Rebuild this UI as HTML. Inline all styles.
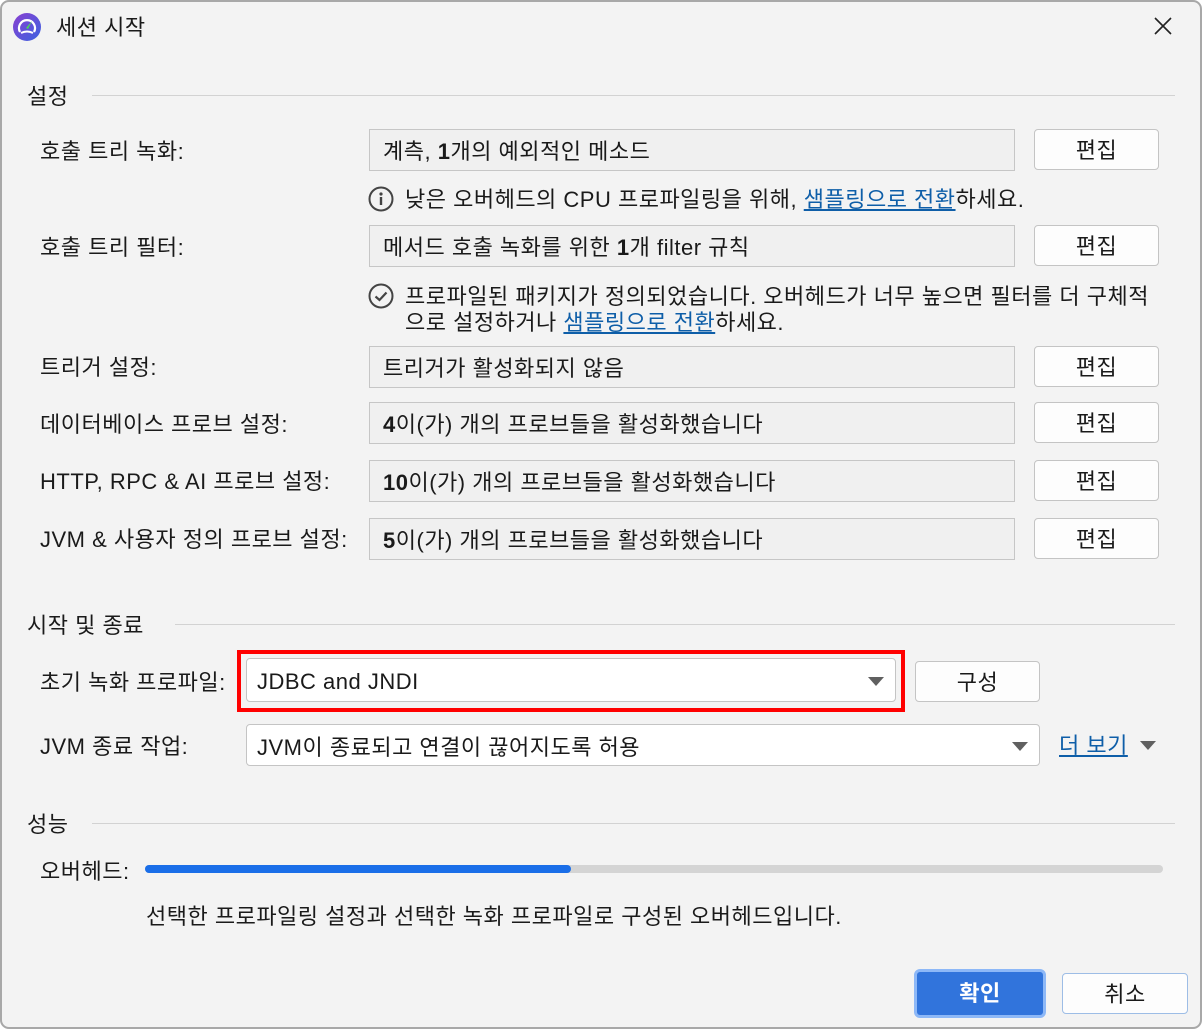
<!DOCTYPE html>
<html><head><meta charset="utf-8"><style>
*{margin:0;padding:0;box-sizing:border-box}
html,body{width:1202px;height:1029px;overflow:hidden;background:#fff}
#w{position:absolute;left:0;top:0;width:1202px;height:1029px;background:#f3f3f3;box-shadow:inset 0 0 0 2px #a8a8a8;border-radius:9px;font-family:"Liberation Sans","Noto Sans CJK KR",sans-serif;color:#1a1a1a;letter-spacing:0.5px}
.t{position:absolute;font-size:22px;line-height:30px;white-space:nowrap}
.line{position:absolute;height:1px;background:#d2d2d2}
.f{position:absolute;left:369px;width:646px;height:42px;background:#f0f0f0;border:1px solid #c6c6c6}
.f span{position:absolute;left:13px;top:7px;font-size:22px;line-height:30px;white-space:nowrap}
.b{position:absolute;left:1034px;width:125px;height:41px;background:#fdfdfd;border:1px solid #c4c4c4;border-radius:4px;font-size:22px;line-height:41px;text-align:center}
a{color:#0e5ea8;text-decoration:underline}
.cb{position:absolute;background:#fff;border:1px solid #c4c4c4;border-radius:4px}
.cb span{position:absolute;left:10px;top:8px;font-size:22px;line-height:30px;white-space:nowrap}
.arr{position:absolute;width:0;height:0;border-left:8px solid transparent;border-right:8px solid transparent;border-top:9px solid #606060}
</style></head><body><div id="w">
<svg style="position:absolute;left:12px;top:12px" width="30" height="30" viewBox="0 0 30 30">
<defs><linearGradient id="g" x1="0" y1="0" x2="1" y2="1"><stop offset="0" stop-color="#8a3fd1"/><stop offset="1" stop-color="#3b63e0"/></linearGradient></defs>
<circle cx="15" cy="15" r="14" fill="url(#g)"/>
<path d="M8 20 A8 8 0 1 1 22 20" fill="none" stroke="#fff" stroke-width="2.2"/>
<path d="M9 21 Q15 18 21 21" fill="none" stroke="#fff" stroke-width="2"/>
<path d="M14 16 L20 9 L16 17 Z" fill="#4cd35a"/>
</svg>
<div class="t" style="left:56px;top:13px">세션 시작</div>
<svg style="position:absolute;left:1153px;top:16px" width="20" height="20" viewBox="0 0 20 20"><path d="M2 2L18 18M18 2L2 18" stroke="#222" stroke-width="1.6"/></svg>

<div class="t" style="left:27px;top:82px">설정</div>
<div class="line" style="left:92px;top:95px;width:1083px"></div>

<div class="t" style="left:40px;top:137px">호출 트리 녹화:</div>
<div class="f" style="top:129px"><span>계측, <b>1</b>개의 예외적인 메소드</span></div>
<div class="b" style="top:129px">편집</div>
<svg style="position:absolute;left:368px;top:186px" width="26" height="26" viewBox="0 0 26 26"><circle cx="13" cy="13" r="11.5" fill="none" stroke="#444" stroke-width="2"/><circle cx="13" cy="8" r="1.6" fill="#444"/><rect x="11.8" y="11" width="2.4" height="8" fill="#444"/></svg>
<div class="t" style="left:405px;top:185px">낮은 오버헤드의 CPU 프로파일링을 위해, <a>샘플링으로 전환</a>하세요.</div>

<div class="t" style="left:40px;top:233px">호출 트리 필터:</div>
<div class="f" style="top:225px"><span>메서드 호출 녹화를 위한 <b>1</b>개 filter 규칙</span></div>
<div class="b" style="top:225px">편집</div>
<svg style="position:absolute;left:368px;top:283px" width="26" height="26" viewBox="0 0 26 26"><circle cx="13" cy="13" r="11.5" fill="none" stroke="#444" stroke-width="2"/><path d="M7.5 13.5L11.5 17L18.5 9.5" fill="none" stroke="#444" stroke-width="2.2"/></svg>
<div class="t" style="left:405px;top:282px">프로파일된 패키지가 정의되었습니다. 오버헤드가 너무 높으면 필터를 더 구체적</div>
<div class="t" style="left:405px;top:308px">으로 설정하거나 <a>샘플링으로 전환</a>하세요.</div>

<div class="t" style="left:40px;top:353px">트리거 설정:</div>
<div class="f" style="top:346px"><span>트리거가 활성화되지 않음</span></div>
<div class="b" style="top:346px">편집</div>

<div class="t" style="left:40px;top:410px">데이터베이스 프로브 설정:</div>
<div class="f" style="top:402px"><span><b>4</b>이(가) 개의 프로브들을 활성화했습니다</span></div>
<div class="b" style="top:402px">편집</div>

<div class="t" style="left:40px;top:467px">HTTP, RPC &amp; AI 프로브 설정:</div>
<div class="f" style="top:460px"><span><b>10</b>이(가) 개의 프로브들을 활성화했습니다</span></div>
<div class="b" style="top:460px">편집</div>

<div class="t" style="left:40px;top:525px">JVM &amp; 사용자 정의 프로브 설정:</div>
<div class="f" style="top:518px"><span><b>5</b>이(가) 개의 프로브들을 활성화했습니다</span></div>
<div class="b" style="top:518px">편집</div>

<div class="t" style="left:27px;top:611px">시작 및 종료</div>
<div class="line" style="left:175px;top:624px;width:1000px"></div>

<div class="t" style="left:40px;top:668px">초기 녹화 프로파일:</div>
<div style="position:absolute;left:237px;top:650px;width:668px;height:62px;border:4px solid #f00"></div>
<div class="cb" style="left:246px;top:658px;width:650px;height:44px"><span>JDBC and JNDI</span><div class="arr" style="left:621px;top:18px"></div></div>
<div class="b" style="left:915px;top:661px;width:125px">구성</div>

<div class="t" style="left:40px;top:732px">JVM 종료 작업:</div>
<div class="cb" style="left:246px;top:724px;width:794px;height:42px"><span>JVM이 종료되고 연결이 끊어지도록 허용</span><div class="arr" style="left:765px;top:17px"></div></div>
<div class="t" style="left:1059px;top:731px"><a>더 보기</a></div>
<div class="arr" style="left:1140px;top:741px"></div>

<div class="t" style="left:27px;top:810px">성능</div>
<div class="line" style="left:92px;top:823px;width:1083px"></div>
<div class="t" style="left:40px;top:857px">오버헤드:</div>
<div style="position:absolute;left:145px;top:865px;width:1018px;height:8px;background:#d4d4d4;border-radius:4px"></div>
<div style="position:absolute;left:145px;top:865px;width:426px;height:8px;background:#1a6ee8;border-radius:4px"></div>
<div class="t" style="left:146px;top:902px">선택한 프로파일링 설정과 선택한 녹화 프로파일로 구성된 오버헤드입니다.</div>

<div style="position:absolute;left:914px;top:969px;width:132px;height:49px;border:3px solid #8db8f7;border-radius:6px;background:#3174dc;color:#fff;font-size:22px;font-weight:bold;line-height:43px;text-align:center">확인</div>
<div class="b" style="left:1062px;top:973px;width:126px;height:41px;border-color:#9dbde6">취소</div>
</div></body></html>
